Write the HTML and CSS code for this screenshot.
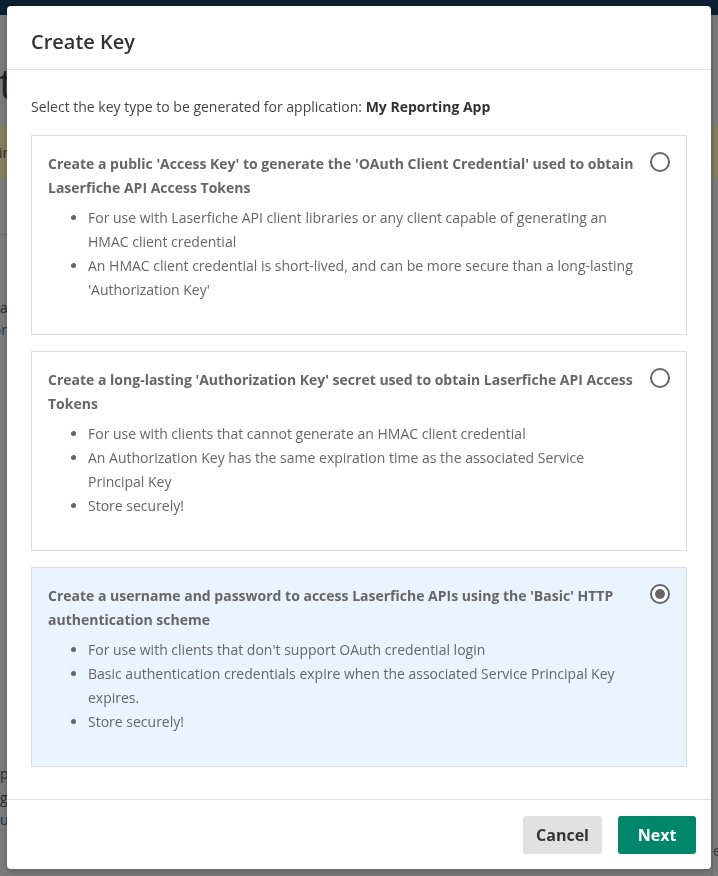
FILE: index.html
```html
<!DOCTYPE html>
<html lang="en">
<head>
<meta charset="utf-8">
<title>Create Key</title>
<link rel="stylesheet" href="styles.css">
</head>
<body>
<div class="page">
  <div class="topbar"></div>
  <div class="page-main">
    <div class="edge edge-left">
      <div class="frag frag-heading"><span>t</span></div>
      <div class="frag frag-band"><span>ir</span></div>
      <div class="frag-rule"></div>
      <div class="frag frag-text frag-a"><span>a</span></div>
      <div class="frag frag-text frag-link frag-end"><span>or</span></div>
      <div class="frag frag-text frag-p"><span>p</span></div>
      <div class="frag frag-text frag-g"><span>g</span></div>
      <div class="frag frag-text frag-link"><span>u</span></div>
    </div>
    <div class="edge edge-right">
      <div class="frag-band-r"></div>
      <div class="frag-e">e</div>
    </div>
  </div>
</div>

<div class="modal" role="dialog" aria-labelledby="modal-title">
  <div class="modal-header">
    <h2 class="modal-title" id="modal-title">Create Key</h2>
  </div>
  <div class="modal-body">
    <p class="intro">Select the key type to be generated for application: <strong>My Reporting App</strong></p>

    <div class="option">
      <div class="option-content">
        <div class="option-title">Create a public 'Access Key' to generate the 'OAuth Client Credential' used to obtain Laserfiche API Access Tokens</div>
        <ul class="option-list">
          <li>For use with Laserfiche API client libraries or any client capable of generating an HMAC client credential</li>
          <li>An HMAC client credential is short-lived, and can be more secure than a long-lasting 'Authorization Key'</li>
        </ul>
      </div>
      <span class="radio"></span>
    </div>

    <div class="option">
      <div class="option-content">
        <div class="option-title">Create a long-lasting 'Authorization Key' secret used to obtain Laserfiche API Access Tokens</div>
        <ul class="option-list">
          <li>For use with clients that cannot generate an HMAC client credential</li>
          <li>An Authorization Key has the same expiration time as the associated Service Principal Key</li>
          <li>Store securely!</li>
        </ul>
      </div>
      <span class="radio"></span>
    </div>

    <div class="option option-selected">
      <div class="option-content">
        <div class="option-title">Create a username and password to access Laserfiche APIs using the 'Basic' HTTP authentication scheme</div>
        <ul class="option-list">
          <li>For use with clients that don't support OAuth credential login</li>
          <li>Basic authentication credentials expire when the associated Service Principal Key expires.</li>
          <li>Store securely!</li>
        </ul>
      </div>
      <span class="radio radio-checked"></span>
    </div>
  </div>
  <div class="modal-footer">
    <button class="btn btn-secondary" type="button">Cancel</button>
    <button class="btn btn-primary" type="button">Next</button>
  </div>
</div>
</body>
</html>
```

FILE: styles.css
```css
html, body {
  margin: 0;
  padding: 0;
}

body {
  width: 718px;
  height: 876px;
  overflow: hidden;
  background: #7b7b7b;
  font-family: "Open Sans", "Liberation Sans", sans-serif;
}

/* ---------- dimmed page behind the dialog ---------- */
.page {
  display: flex;
  flex-direction: column;
  height: 876px;
}

.topbar {
  height: 15px;
  background: #0c1f33;
  flex: none;
}

.page-main {
  flex: 1;
  display: flex;
  justify-content: space-between;
}

.edge {
  width: 7px;
  overflow: hidden;
  display: flex;
  flex-direction: column;
}

.edge-right {
  border-left: 2px solid #727272;
  box-sizing: border-box;
}

.frag {
  display: flex;
  justify-content: flex-start;
  white-space: nowrap;
  color: #2c2c2c;
}

.frag-end {
  justify-content: flex-end;
}

.frag-heading {
  margin-top: 40px;
  height: 56px;
  font-size: 42px;
  line-height: 56px;
  font-weight: 400;
  color: #262626;
}

.frag-heading span {
  margin-left: -1px;
}

.frag-band {
  margin-top: 16px;
  height: 50px;
  background: #897e5f;
  align-items: center;
  font-size: 14px;
  color: #2a2a2a;
}

.frag-band span {
  margin-left: -1px;
}

.frag-rule {
  margin-top: 57px;
  height: 1px;
  background: #6a6a6a;
}

.frag-text {
  font-size: 14px;
  line-height: 22px;
  height: 22px;
}

.frag-a {
  margin-top: 62px;
}

.frag-link {
  color: #13385a;
}

.frag-p {
  margin-top: 422px;
}

.frag-g {
  margin-top: 2px;
}

.frag-band-r {
  margin-top: 112px;
  height: 50px;
  background: #897e5f;
}

.frag-e {
  margin-top: 664px;
  font-size: 14px;
  line-height: 20px;
  color: #3a3a3a;
  white-space: nowrap;
}

/* ---------- dialog ---------- */
.modal {
  position: fixed;
  left: 7px;
  top: 6px;
  width: 704px;
  height: 863px;
  background: #fff;
  border-radius: 4px;
  display: flex;
  flex-direction: column;
  box-shadow: 0 2px 6px rgba(0, 0, 0, 0.25);
}

.modal-header {
  padding: 24px 24px 15px;
  border-bottom: 1px solid #e1e1e1;
}

.modal-title {
  margin: 0;
  font-size: 20px;
  line-height: 24px;
  font-weight: 600;
  color: #333;
}

.modal-body {
  flex: 1;
  padding: 25px 24px 0;
  display: flex;
  flex-direction: column;
  gap: 16px;
}

.intro {
  margin: 0;
  font-size: 14px;
  line-height: 24px;
  color: #444;
}

.intro strong {
  font-weight: 700;
  color: #333;
}

.option {
  height: 200px;
  box-sizing: border-box;
  border: 1px solid #dcdcdc;
  padding: 16px 16px 16px;
  display: flex;
  align-items: flex-start;
  background: #fff;
}

.option-selected {
  background: #eaf4fe;
  border-color: #d8dde2;
}

.option-content {
  width: 594px;
  flex: none;
}

.option-title {
  font-size: 14px;
  line-height: 24px;
  font-weight: 700;
  color: #666;
}

.option-list {
  margin: 6px 0 0;
  padding-left: 40px;
  font-size: 14px;
  line-height: 24px;
  color: #666;
}

.radio {
  margin-left: auto;
  margin-top: 0;
  width: 20px;
  height: 20px;
  box-sizing: border-box;
  border: 2px solid #666;
  border-radius: 50%;
  flex: none;
  display: flex;
  align-items: center;
  justify-content: center;
  background: #fff;
}

.radio-checked::after {
  content: "";
  width: 10px;
  height: 10px;
  border-radius: 50%;
  background: #666;
}

.modal-footer {
  border-top: 1px solid #e1e1e1;
  padding: 16px 15px 15px;
  display: flex;
  justify-content: flex-end;
  gap: 16px;
}

.btn {
  height: 38px;
  min-width: 78px;
  padding: 0 12px;
  border: none;
  border-radius: 3px;
  font-family: "Open Sans", "Liberation Sans", sans-serif;
  font-size: 16px;
  font-weight: 700;
  cursor: pointer;
}

.btn-secondary {
  background: #e1e1e1;
  color: #333;
  min-width: 79px;
}

.btn-primary {
  background: #00866a;
  color: #fff;
}
```
